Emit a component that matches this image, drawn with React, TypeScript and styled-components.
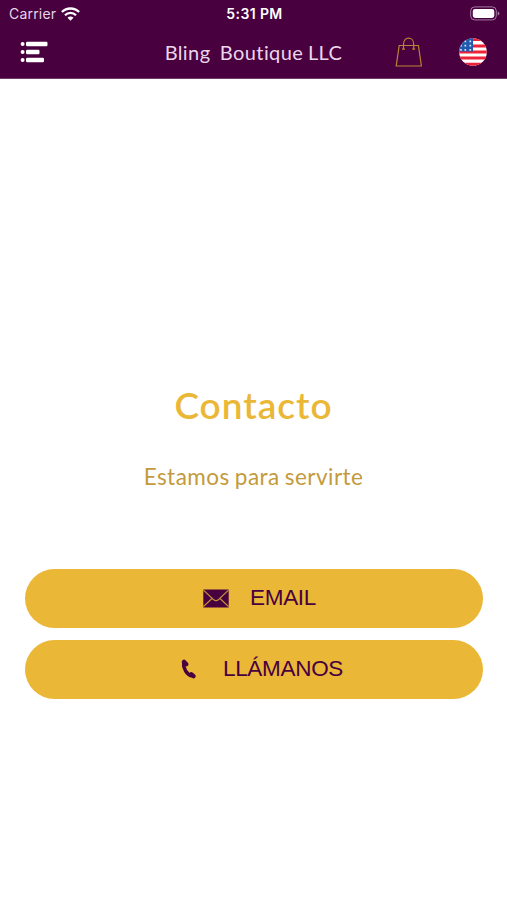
import React from "react";
import styled, { createGlobalStyle } from "styled-components";

const plum = "#48003f";
const gold = "#eab736";

const GlobalStyle = createGlobalStyle`
  * { box-sizing: border-box; }
  body { margin: 0; background: #fff; }
`;

const Screen = styled.div`
  width: 100%;
  height: 900px;
  display: flex;
  flex-direction: column;
  background: #fff;
  overflow: hidden;
`;

const Header = styled.header`
  height: 79px;
  flex: none;
  background: ${plum};
  border-bottom: 1px solid #6f3a69;
`;

const StatusBar = styled.div`
  height: 27px;
  padding: 0 7px 0 9px;
  display: grid;
  grid-template-columns: 1fr auto 1fr;
  align-items: center;
  color: #fff;
  font: 400 14px/27px Inter, sans-serif;
`;

const Carrier = styled.div`
  display: flex;
  align-items: center;
  gap: 5px;
  color: #e6d5e6;
  letter-spacing: 0.2px;
`;

const Clock = styled.div`
  font-size: 14px;
  font-weight: 600;
  letter-spacing: 0.4px;
`;

const Battery = styled.svg`
  justify-self: end;
  display: block;
`;

const NavBar = styled.nav`
  height: 50px;
  padding: 0 20px;
  display: grid;
  grid-template-columns: 1fr auto 1fr;
  align-items: center;
`;

const IconButton = styled.button`
  padding: 0;
  border: 0;
  background: none;
  display: flex;
`;

const NavTitle = styled.h1`
  margin: 0;
  color: #ecd6ec;
  font: 400 20px/50px Lato, sans-serif;
  letter-spacing: 0.4px;
  word-spacing: -0.8px;
  white-space: pre;
`;

const Actions = styled.div`
  display: flex;
  justify-content: flex-end;
  align-items: center;
  gap: 36px;
`;

const Content = styled.main`
  flex: 1;
  padding: 299px 25px 0;
  text-align: center;
`;

const Heading = styled.h2`
  margin: 0;
  color: ${gold};
  font: 600 37px/54px Lato, sans-serif;
  letter-spacing: 1px;
`;

const Subheading = styled.p`
  margin: 28px 0 0;
  color: #c39a3c;
  font: 400 22.5px/34px Lato, sans-serif;
  letter-spacing: 0.45px;
  word-spacing: -1px;
`;

const ButtonList = styled.div`
  margin-top: 74.5px;
  display: grid;
  gap: 12px;
`;

const ContactButton = styled.button<{ $gap: number; $shift: number }>`
  height: 59px;
  width: 458px;
  padding: 0 0 0 ${(p) => p.$shift}px;
  border: 0;
  border-radius: 30px;
  background: ${gold};
  color: ${plum};
  display: flex;
  align-items: center;
  justify-content: center;
  gap: ${(p) => p.$gap}px;
  font: 400 22.5px/58px "Liberation Sans", Arial, sans-serif;
`;

const ButtonLabel = styled.span<{ $spacing: number }>`
  letter-spacing: ${(p) => p.$spacing}px;
`;

const Wifi = () => (
  <svg width="19" height="14" viewBox="0 0 19 14" fill="none" stroke="#fff" strokeWidth="2.3">
    <path d="M.9 5C5.6.3 13.4.3 18.1 5" />
    <path d="M4 8.2c3-3 8-3 11 0" />
    <path d="M6.5 10.8c1.7-1.7 4.3-1.7 6 0l-3 3z" fill="#fff" stroke="none" />
  </svg>
);

const MenuIcon = () => (
  <svg width="28" height="22" viewBox="0 0 28 22" fill="#fff">
    <circle cx="2.6" cy="3" r="2" />
    <circle cx="2.6" cy="11" r="2" />
    <circle cx="2.6" cy="19" r="2" />
    <rect x="6" y=".8" width="21.5" height="4.5" rx="1.2" />
    <rect x="6" y="8.8" width="13.5" height="4.5" rx="1.2" />
    <rect x="6" y="16.8" width="18" height="4.5" rx="1.2" />
  </svg>
);

const BagIcon = () => (
  <svg width="28" height="30" viewBox="0 0 28 30" fill="none" stroke="#b98335" strokeWidth="1.2">
    <path d="M4.2 8.5h19.2l3 20.5H1.2z" />
    <path d="M8.5 12V7.2c0-8 10.2-8 10.2 0V12" />
    <path d="M7 12.2h3M17.2 12.2h3" />
  </svg>
);

const FlagIcon = () => (
  <svg width="28" height="28" viewBox="0 0 28 28">
    <defs>
      <clipPath id="flag-round"><circle cx="14" cy="14" r="13.8" /></clipPath>
    </defs>
    <g clipPath="url(#flag-round)">
      <rect width="28" height="28" fill="#fff" />
      <path
        d="M0 1.5h28M0 8h28M0 14h28M0 20h28M0 26.3h28"
        stroke="#ef2338"
        strokeWidth="3.2"
      />
      <rect width="14" height="13.5" fill="#2059ad" />
      <path
        d="M6.3 2.6v11M11.3 2.6v11"
        stroke="#d4e5ff"
        strokeWidth="1.7"
        strokeDasharray="1.7 2.5"
      />
      <path d="M2 6.8v6" stroke="#d4e5ff" strokeWidth="1.7" strokeDasharray="1.7 2.5" />
    </g>
  </svg>
);

const MailIcon = () => (
  <svg width="26" height="19" viewBox="0 0 26 19">
    <rect x=".3" y=".5" width="25.4" height="18" fill={plum} />
    <path
      d="M.5 1.2 10.4 10.5c1.6 1.4 3.6 1.4 5.2 0L25.5 1.2M.5 17.5 9 9.5M25.5 17.5 17 9.5"
      fill="none"
      stroke="#c59438"
      strokeWidth="1.1"
    />
  </svg>
);

const PhoneIcon = () => (
  <svg width="16" height="20" viewBox="0 0 16 20">
    <path
      d="M2.6 3.5C1.8 9.3 6 15.8 11 17.2"
      fill="none"
      stroke={plum}
      strokeWidth="3.4"
    />
    <path
      d="M3 2.8 5.3 5.2M10.2 15.2l2.300 2"
      stroke={plum}
      strokeWidth="4.2"
      strokeLinecap="round"
    />
  </svg>
);

export default function App() {
  return (
    <Screen>
      <GlobalStyle />
      <Header>
        <StatusBar>
          <Carrier>Carrier <Wifi /></Carrier>
          <Clock>5:31 PM</Clock>
          <Battery width="30" height="15" viewBox="0 0 30 15">
            <rect x=".7" y=".9" width="25.6" height="13" rx="4" fill="none" stroke="#a37aa2" />
            <rect x="2.8" y="2.9" width="21.5" height="9" rx="2.3" fill="#fff" />
            <path d="M27.7 5.2c2.3.8 2.3 3.6 0 4.4z" fill="#a37aa2" />
          </Battery>
        </StatusBar>
        <NavBar>
          <IconButton aria-label="Menú"><MenuIcon /></IconButton>
          <NavTitle>{"Bling  Boutique LLC"}</NavTitle>
          <Actions>
            <IconButton aria-label="Bolsa"><BagIcon /></IconButton>
            <IconButton aria-label="Idioma"><FlagIcon /></IconButton>
          </Actions>
        </NavBar>
      </Header>
      <Content>
        <Heading>Contacto</Heading>
        <Subheading>Estamos para servirte</Subheading>
        <ButtonList>
          <ContactButton $gap={21} $shift={11}>
            <MailIcon />
            <ButtonLabel $spacing={-0.35}>EMAIL</ButtonLabel>
          </ContactButton>
          <ContactButton $gap={26} $shift={16}>
            <PhoneIcon />
            <ButtonLabel $spacing={-0.3}>LLÁMANOS</ButtonLabel>
          </ContactButton>
        </ButtonList>
      </Content>
    </Screen>
  );
}
